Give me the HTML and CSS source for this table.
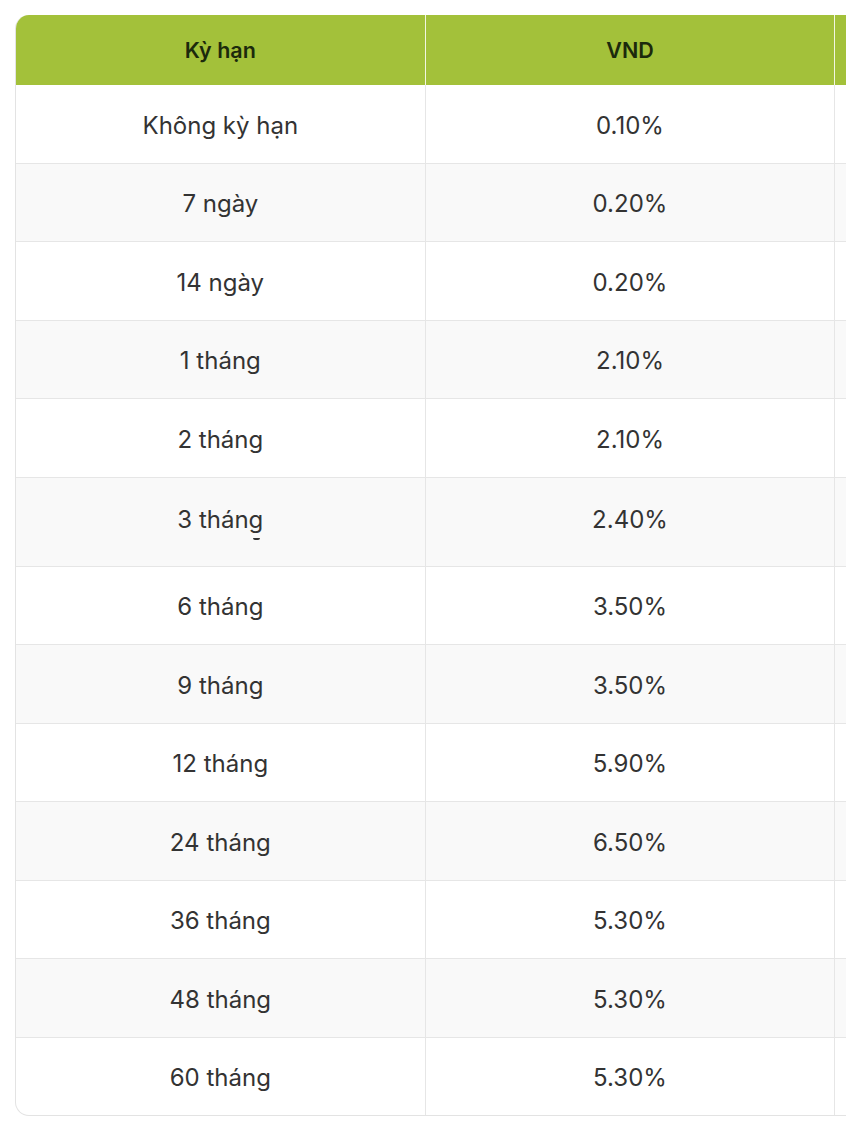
FILE: index.html
```html
<!DOCTYPE html>
<html lang="vi">
<head>
<meta charset="utf-8">
<link rel="stylesheet" href="styles.css">
</head>
<body>
<div class="wrap">
<table class="rates">
<thead>
<tr><th>Kỳ hạn</th><th>VND</th><th></th></tr>
</thead>
<tbody>
<tr><td>Không kỳ hạn</td><td>0.10%</td><td></td></tr>
<tr><td>7 ngày</td><td>0.20%</td><td></td></tr>
<tr><td>14 ngày</td><td>0.20%</td><td></td></tr>
<tr><td>1 tháng</td><td>2.10%</td><td></td></tr>
<tr><td>2 tháng</td><td>2.10%</td><td></td></tr>
<tr class="tall"><td>3 thán<span class="g">g<span class="mark"></span></span></td><td>2.40%</td><td></td></tr>
<tr><td>6 tháng</td><td>3.50%</td><td></td></tr>
<tr><td>9 tháng</td><td>3.50%</td><td></td></tr>
<tr><td>12 tháng</td><td>5.90%</td><td></td></tr>
<tr><td>24 tháng</td><td>6.50%</td><td></td></tr>
<tr><td>36 tháng</td><td>5.30%</td><td></td></tr>
<tr><td>48 tháng</td><td>5.30%</td><td></td></tr>
<tr><td>60 tháng</td><td>5.30%</td><td></td></tr>
</tbody>
</table>
</div>
</body>
</html>
```

FILE: styles.css
```css
html, body {
  margin: 0;
  padding: 0;
  background: #ffffff;
  overflow: hidden;
}
.wrap {
  padding: 15px 0 0 15px;
  width: 1400px;
}
.rates {
  border-collapse: separate;
  border-spacing: 0;
  font-family: Inter, "Noto Sans", sans-serif;
  width: 1231px;
  table-layout: fixed;
  border: 1px solid #e3e3e3;
  border-top: none;
  border-radius: 14px;
  overflow: hidden;
}
.rates th {
  background: #a3c13a;
  color: #1c2a0c;
  font-weight: 600;
  font-size: 21.5px;
  height: 70px;
  padding: 0;
  border-right: 1px solid #f2f6e2;
  text-align: center;
}
.rates td {
  height: 74.5px;
  padding: 3px 0 0;
  text-align: center;
  font-size: 24px;
  color: #333333;
  border-right: 1px solid #e6e6e6;
  border-top: 1px solid #e6e6e6;
}
.rates tr > :last-child {
  border-right: none;
}
.rates tbody tr:nth-child(even) td {
  background: #f9f9f9;
}
.rates tbody tr:first-child td {
  border-top: none;
}
.rates tr.tall td {
  height: 83px;
  padding: 0 0 5px;
}
.g {
  position: relative;
}
.mark {
  position: absolute;
  left: 4px;
  top: 33px;
  width: 7px;
  height: 2px;
  border-radius: 0 0 3px 3px;
  background: #333333;
}
```
